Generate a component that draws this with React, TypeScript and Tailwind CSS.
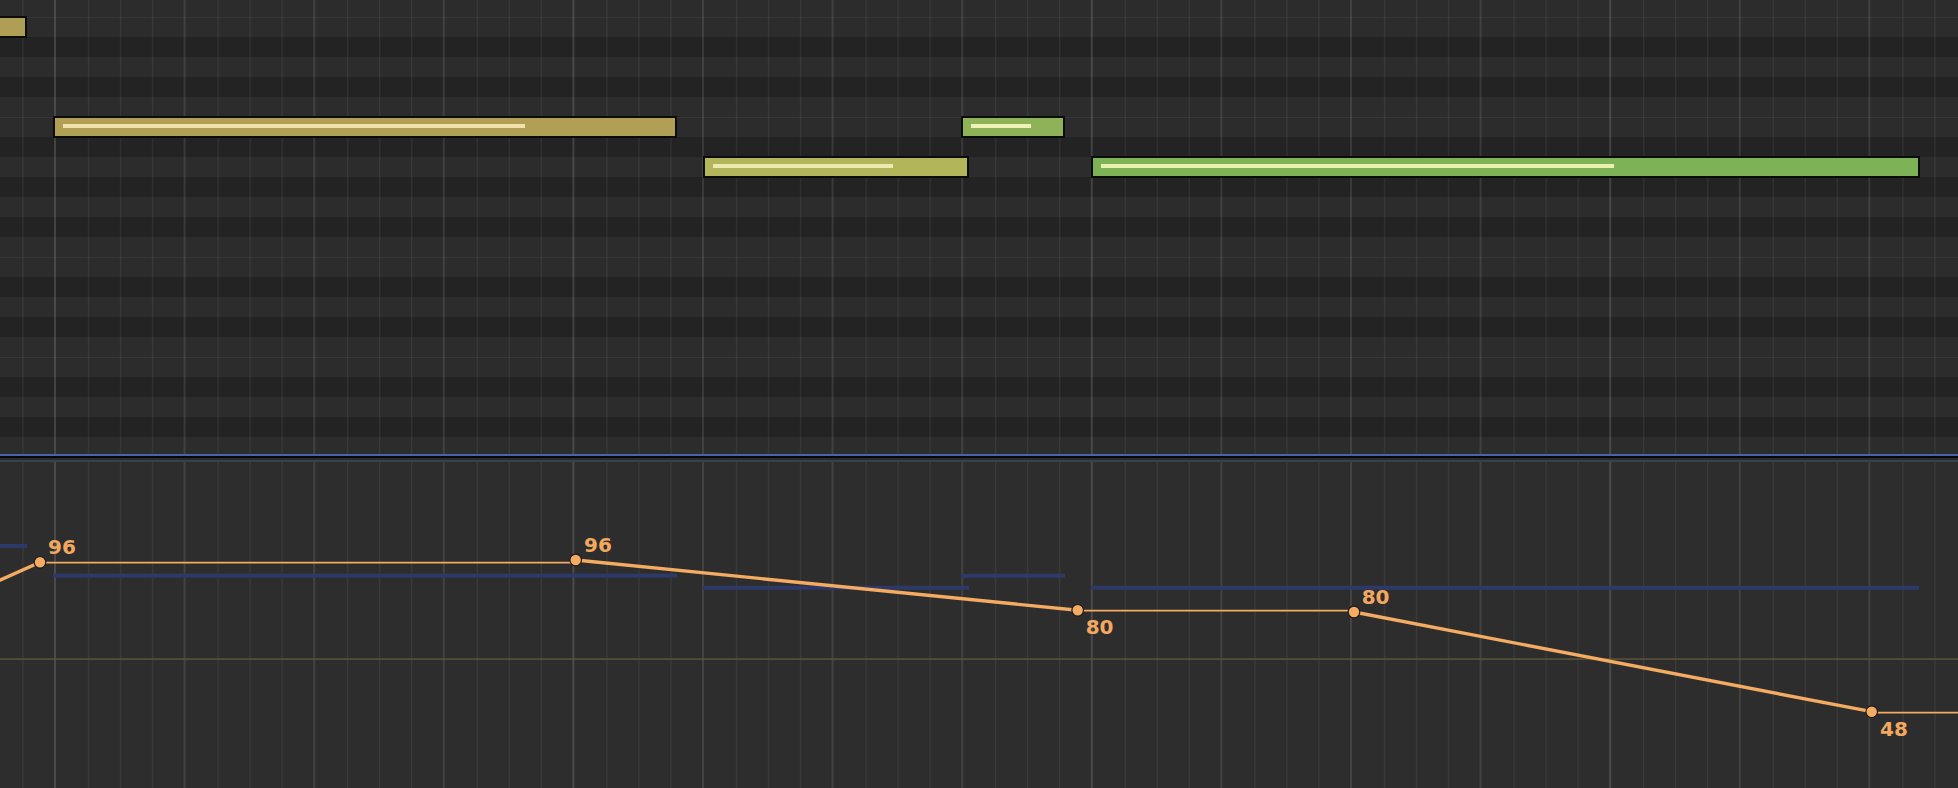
import React from "react";

// piano rows top -> bottom, starting on F (true = white key)
const KEY_PATTERN = [true, true, false, true, false, true, true, false, true, false, true, false];

const notes = [
  { x: -2, w: 29, y: 16, fill: "#ae9f55", bar: null as null | [number, number], barColor: "" },
  { x: 53, w: 624, y: 116, fill: "#b09f55", bar: [63, 525] as [number, number], barColor: "#f0e2aa" },
  { x: 703, w: 266, y: 156, fill: "#b3b55b", bar: [713, 893] as [number, number], barColor: "#ede9b0" },
  { x: 961, w: 104, y: 116, fill: "#8db257", bar: [971, 1031] as [number, number], barColor: "#eef2b4" },
  { x: 1091, w: 829, y: 156, fill: "#7db257", bar: [1101, 1614] as [number, number], barColor: "#e9f1b0" },
];

const laneSegments = [
  { x1: 0, x2: 27, y: 82 },
  { x1: 53, x2: 677, y: 111.6 },
  { x1: 703, x2: 969, y: 123.8 },
  { x1: 961, x2: 1065, y: 111.8 },
  { x1: 1091, x2: 1919, y: 123.8 },
];

const points = [
  { x: 40, y: 100.3, label: "96", lx: 48, ly: 92 },
  { x: 575.7, y: 98, label: "96", lx: 584, ly: 90.3 },
  { x: 1077.7, y: 148.3, label: "80", lx: 1085.7, ly: 172 },
  { x: 1354, y: 150, label: "80", lx: 1361.7, ly: 142 },
  { x: 1871.7, y: 249.7, label: "48", lx: 1880, ly: 274 },
];

function GridLines({ height }: { height: number }) {
  const lines: React.ReactNode[] = [];
  for (let b = -1; b < 16; b++) {
    const bx = 54 + 129.6 * b;
    const isBar = b % 4 === 0;
    lines.push(
      <rect key={"b" + b} x={bx} y={0} width={2} height={height} fill={isBar ? "rgba(255,255,255,0.14)" : "rgba(255,255,255,0.1)"} />
    );
    [34, 66, 98].forEach((o) => {
      lines.push(<rect key={`s${b}-${o}`} x={bx + o - 0.2} y={0} width={1.5} height={height} fill="rgba(255,255,255,0.06)" />);
    });
  }
  return (
    <svg className="absolute inset-0 pointer-events-none" width={1958} height={height}>
      {lines}
    </svg>
  );
}

function PianoRoll() {
  const rows = Array.from({ length: 23 }, (_, i) => i);
  return (
    <div className="relative h-[454px] shrink-0 overflow-hidden flex flex-col">
      {rows.map((i) => {
        const white = KEY_PATTERN[i % 12];
        const split = i % 12 === 1 || i % 12 === 6;
        return (
          <div
            key={i}
            className={
              (i === 0 ? "h-[17px] " : "h-[20px] ") +
              "shrink-0 " +
              (white ? "bg-[#2c2c2c] " : "bg-[#232323] ") +
              (split ? "border-t border-[#363636]" : "")
            }
          />
        );
      })}

      <GridLines height={454} />

      {/* notes */}
      {notes.map((n, i) => (
        <div
          key={i}
          className="absolute h-[22px] border-2 border-[#0c0c0c]"
          style={{ left: n.x, top: n.y, width: n.w, background: n.fill }}
        >
          {n.bar && (
            <div
              className="absolute top-[6px] h-[4px]"
              style={{ left: n.bar[0] - n.x - 2, width: n.bar[1] - n.bar[0], background: n.barColor }}
            />
          )}
        </div>
      ))}
    </div>
  );
}

function VelocityLane() {
  const [p1, p2, p3, p4, p5] = points;
  return (
    <div className="relative flex-1 bg-[#2d2d2d]">
      <GridLines height={326} />
      <svg className="absolute inset-0" width={1958} height={326}>
        <rect x={0} y={196.3} width={1958} height={1.5} fill="#5a5538" />

        {laneSegments.map((s, i) => (
          <rect key={i} x={s.x1} y={s.y} width={s.x2 - s.x1} height={4} fill="#2d3968" />
        ))}

        {/* held values */}
        <line x1={p1.x} y1={100.7} x2={p2.x} y2={100.7} stroke="#f4ab62" strokeWidth={1.7} />
        <line x1={p3.x} y1={148.7} x2={p4.x} y2={148.7} stroke="#f4ab62" strokeWidth={1.7} />
        <line x1={p5.x} y1={250.7} x2={1958} y2={250.7} stroke="#f4ab62" strokeWidth={1.7} />

        {/* ramps */}
        <line x1={-10} y1={122.5} x2={p1.x} y2={p1.y} stroke="#f4ab62" strokeWidth={3.4} />
        <line x1={p2.x} y1={p2.y} x2={p3.x} y2={p3.y} stroke="#f4ab62" strokeWidth={3.4} />
        <line x1={p4.x} y1={p4.y} x2={p5.x} y2={p5.y} stroke="#f4ab62" strokeWidth={3.4} />

        {points.map((p, i) => (
          <circle key={i} cx={p.x} cy={p.y} r={5.8} fill="#f4ac63" stroke="#1c1c1c" strokeWidth={1.2} />
        ))}

        {points.map((p, i) => (
          <text
            key={"t" + i}
            x={p.lx}
            y={p.ly}
            fill="#f2a95f"
            fontSize={20}
            fontWeight={700}
            fontFamily="'DejaVu Sans', sans-serif"
          >
            {p.label}
          </text>
        ))}
      </svg>
    </div>
  );
}

export default function App() {
  return (
    <div className="w-[1958px] h-[788px] overflow-hidden flex flex-col bg-[#2d2d2d] font-['DejaVu_Sans',sans-serif]">
      <PianoRoll />
      <div className="h-[2px] shrink-0 bg-[#4a61ab]" />
      <div className="h-[2px] shrink-0 bg-[#080808]" />
      <div className="h-[2px] shrink-0 bg-[#2b2b2b]" />
      <div className="h-[2px] shrink-0 bg-[#39404d]" />
      <VelocityLane />
    </div>
  );
}
